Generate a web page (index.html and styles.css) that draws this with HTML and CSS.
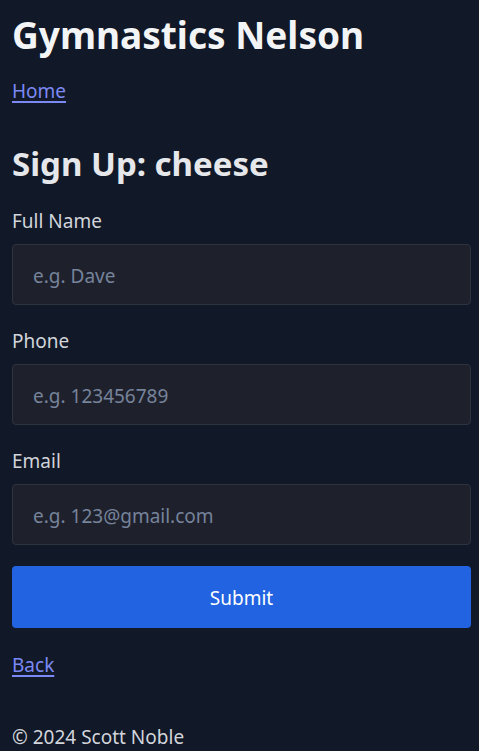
FILE: index.html
```html
<!DOCTYPE html>
<html lang="en">
<head>
<meta charset="utf-8">
<title>Sign Up: cheese</title>
<link rel="stylesheet" href="styles.css">
</head>
<body>
<header class="site-header">
  <h1 class="site-title">Gymnastics Nelson</h1>
  <nav class="nav"><a class="link" href="#">Home</a></nav>
</header>
<main class="main">
  <h2 class="page-title">Sign Up: cheese</h2>
  <form class="form">
    <label class="field">
      <span class="field-label">Full Name</span>
      <input class="input" type="text" placeholder="e.g. Dave">
    </label>
    <label class="field">
      <span class="field-label">Phone</span>
      <input class="input" type="text" placeholder="e.g. 123456789">
    </label>
    <label class="field">
      <span class="field-label">Email</span>
      <input class="input" type="text" placeholder="e.g. 123@gmail.com">
    </label>
    <button class="submit" type="button">Submit</button>
  </form>
  <a class="link back" href="#">Back</a>
</main>
<footer class="footer">© 2024 Scott Noble</footer>
</body>
</html>
```

FILE: styles.css
```css
* { box-sizing: border-box; }
html, body { margin: 0; }
body {
  background: #111827;
  color: #f3f4f6;
  font-family: "Noto Sans", "Open Sans", sans-serif;
  padding: 12px 8px 0 12px;
  height: 751px;
  overflow: hidden;
}
.site-title {
  margin: 0;
  font-size: 37px;
  line-height: 46px;
  font-weight: 700;
  color: #f3f4f6;
}
.nav { margin-top: 20px; font-size: 19px; line-height: 26px; }
.link {
  color: #7c89f5;
  text-decoration: underline;
  text-decoration-thickness: 2px;
  text-underline-offset: 3px;
}
.main { margin-top: 40px; }
.page-title {
  margin: 0;
  font-size: 33px;
  line-height: 40px;
  font-weight: 700;
  color: #e5e7eb;
}
.form { display: flex; flex-direction: column; gap: 21px; margin-top: 22px; }
.field { display: flex; flex-direction: column; gap: 10px; }
.field-label { margin-top: 2px; font-size: 19px; line-height: 26px; color: #d1d5db; }
.input {
  height: 61px;
  width: 100%;
  background: #1e212c;
  border: 1px solid #2e3340;
  border-radius: 4px;
  padding: 2px 20px 0;
  font-family: inherit;
  font-size: 19px;
  color: #e5e7eb;
}
.input::placeholder { color: #76839b; }
.submit {
  height: 62px;
  width: 100%;
  background: #2163e0;
  border: none;
  border-radius: 4px;
  color: #ffffff;
  font-family: inherit;
  font-size: 19px;
  padding-top: 2px;
}
.back { display: inline-block; margin-top: 24px; font-size: 19px; line-height: 26px; }
.footer { margin-top: 46px; font-size: 19px; line-height: 26px; color: #d1d5db; }
```
